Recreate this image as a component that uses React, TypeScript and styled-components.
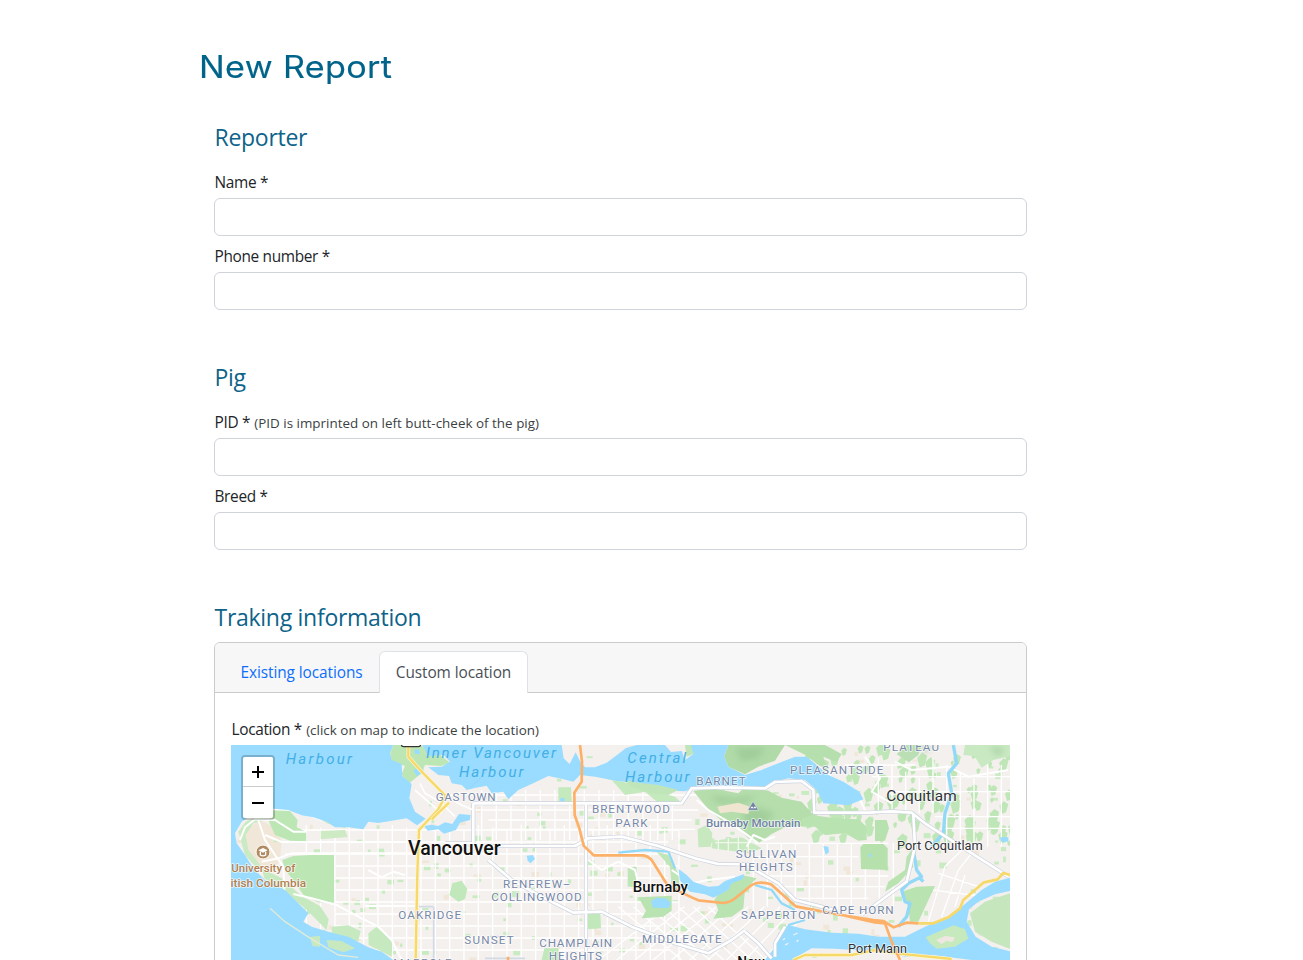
import React from 'react';
import styled, { createGlobalStyle } from 'styled-components';

const GlobalStyle = createGlobalStyle`
  *, *::before, *::after { box-sizing: border-box; }
  body {
    margin: 0;
    height: 960px;
    overflow: hidden;
    background: #fff;
    color: #212529;
    font: 400 15.4px/24px "Open Sans", "Noto Sans", sans-serif;
  }
`;

const Page = styled.main`
  width: 843px;
  height: 960px;
  margin-left: 199px;
  padding-top: 47px;
  overflow: hidden;
`;

const Title = styled.h1`
  margin: 0 0 32px;
  height: 40px;
  font: 400 31px/40px Inter, sans-serif;
  color: #00638a;
  -webkit-text-stroke: 0.15px #00638a;
  letter-spacing: 0.3px;
  white-space: nowrap;
  transform: scaleX(1.102);
  transform-origin: left;
`;

const Section = styled.section`
  margin: 0 15px 49px;
`;

const SectionTitle = styled.h2<{ $tight?: boolean }>`
  margin: 0 0 ${(p) => (p.$tight ? 5 : 14)}px;
  padding: 3px 0 0 0.5px;
  height: 38px;
  font-size: 23px;
  font-weight: 400;
  letter-spacing: -0.28px;
  line-height: 30px;
  color: #0e638a;
`;

const Field = styled.div`
  display: flex;
  flex-direction: column;
  gap: 3px;
  margin-bottom: 9px;
`;

const Label = styled.label`
  display: block;
  height: 24px;
  padding-left: 0.5px;
  letter-spacing: -0.33px;
  white-space: nowrap;
`;

const Hint = styled.small`
  margin-left: 0.5px;
  font-size: 13.4px;
  letter-spacing: 0.02px;
  color: #3b3f43;
`;

const Input = styled.input`
  width: 100%;
  height: 38px;
  padding: 6px 12px;
  border: 1px solid #ced4da;
  border-radius: 6px;
  background: #fff;
  font: inherit;
`;

const Card = styled.div`
  border: 1px solid #cbcbcb;
  border-radius: 6px;
  height: 500px;
`;

const CardHeader = styled.div`
  display: flex;
  align-items: flex-end;
  height: 50px;
  padding-left: 9px;
  background: #f7f7f7;
  border-bottom: 1px solid #cbcbcb;
  border-radius: 5px 5px 0 0;
`;

const Tab = styled.button<{ $active?: boolean }>`
  width: ${(p) => (p.$active ? 149 : 155)}px;
  height: 42px;
  margin-bottom: -1px;
  padding: 0;
  border: 1px solid ${(p) => (p.$active ? '#dee2e6' : 'transparent')};
  border-bottom: 0;
  border-radius: 6px 6px 0 0;
  background: ${(p) => (p.$active ? '#fff' : 'transparent')};
  color: ${(p) => (p.$active ? '#495057' : '#0d6efd')};
  font: inherit;
  letter-spacing: -0.08px;
  white-space: nowrap;
`;

const CardBody = styled.div`
  padding: 25px 16px 16px;
`;

const MapFrame = styled.div`
  position: relative;
  width: 779px;
  height: 400px;
  margin-top: 3px;
  background: #f4f0ee;
  overflow: hidden;
`;

const ZoomControl = styled.div`
  position: absolute;
  top: 10px;
  left: 10px;
  width: 34px;
  border: 2px solid rgba(0, 0, 0, 0.2);
  border-radius: 4px;
  background-clip: padding-box;
`;

const ZoomButton = styled.button`
  display: block;
  width: 30px;
  height: 30px;
  padding: 0;
  border: 0;
  background: #fff;

  &:first-child {
    border-bottom: 1px solid #ccc;
    border-radius: 2px 2px 0 0;
  }
  &:last-child {
    height: 31px;
    border-radius: 0 0 2px 2px;
  }
  svg { display: block; margin: auto; }
`;

/* Map units are a third of a pixel. */
const water = [
  // English Bay
  'M18 15H505L495 40 500 60 530 72 532 108 560 132 553 175 570 215 602 236 576 256 545 235 500 242 460 249 430 245 415 268 370 262 330 262 305 245 265 232 230 226 190 210 130 205 80 225 50 245 30 280 35 310 60 345 85 385 120 420 180 450 220 490 250 520 235 545 260 560 320 578 370 590 430 622 470 635 505 660H18Z',
  // False Creek
  'M597 258L620 254 640 258 660 247 682 252 702 222 737 225 735 240 705 248 693 270 657 281 640 268 608 272Z',
  // Vancouver Harbour
  'M592 15H1010L1016 55 1034 72 1052 37 1066 65 1080 82 1110 82 1145 68 1180 42 1203 24 1235 15H1320L1338 36 1370 33 1380 60 1405 42 1390 15H1510L1497 50 1510 80 1560 105 1610 90 1660 70 1710 50 1745 50 1775 75 1810 105 1855 125 1903 155 1915 178 1870 196 1795 190 1775 150 1740 120 1690 115 1650 125 1620 145 1560 140 1480 138 1420 140 1380 154 1270 150 1220 127 1180 124 1110 110 1065 105 1045 125 1010 116 970 108 920 132 880 150 850 178 835 155 800 160 785 137 750 144 725 150 710 135 680 130 672 108 640 105 610 82 650 80 675 65 655 44 610 48Z',
  // Burnaby Lake and Deer Lake
  'M1361 387L1385 405 1405 425 1450 440 1480 438 1500 423 1558 402 1553 418 1520 430 1510 450 1465 473 1440 463 1395 455 1364 420Z',
  'M1278 483L1295 473 1325 476 1338 490 1330 504 1284 503Z',
  // Fraser River
  'M1620 660L1650 620 1660 580 1690 555 1740 568 1820 578 1900 581 1960 590 2040 590 2100 560 2170 530 2210 500 2270 450 2310 425 2355 413V453L2310 463 2260 485 2232 508 2225 545 2252 590 2300 620 2355 634V660H2240L2120 645 2040 650 1970 635 1900 631 1830 626 1760 625 1700 660Z',
  'M230 578L265 579 272 597 322 595 350 603 315 590 380 608 438 636 450 660H405L350 645 310 649 280 632 275 615 250 610Z',
  'M905 347L923 345 930 357 916 370 908 362Z',
  'M1795 318L1810 320 1812 337 1802 344Z M2325 292H2350V305H2328Z',
  'M1006 174H1018V185H1006Z M1930 345L1940 340 1938 355Z',
];

const parks = [
  // Stanley Park
  ['#bde6b5', 'M505 15H580L628 30 675 68 648 78 600 75 590 100 550 132 530 103 540 78 495 62 496 40Z'],
  // Pacific Spirit and the golf courses
  ['#bde6b5', 'M205 348L255 345 327 345V488L280 487 236 466 205 420 180 390 172 360Z'],
  ['#bde6b5', 'M135 205L190 208 218 240 215 262 244 275V304L195 302 150 285 132 245Z'],
  ['#cdeac5', 'M335 253L305 225 290 238 305 250 360 265 372 250ZM287 273L360 270 368 291 287 298Z'],
  ['#c7e9c0', 'M110 385L170 415 230 468 285 498 311 538 305 570 240 505 178 455 118 415Z'],
  ['#c7e9c0', 'M320 560L370 556 407 573 400 602 380 615 321 595ZM430 580L455 560 502 605 500 650 431 615Z'],
  ['#c1e8ba', 'M682 430L710 422 727 447 720 478 700 485 673 465Z'],
  ['#c1e8ba', 'M1085 520L1126 516 1128 565 1088 568ZM958 625L1000 624 1002 660H950Z'],
  // Burnaby Mountain
  ['#b5deac', 'M1405 153L1460 145 1540 160 1560 140 1630 152 1670 173 1730 185 1765 225 1740 258 1680 262 1640 282 1600 310 1570 295 1535 260 1490 242 1450 208Z'],
  ['#b0dba8', 'M1510 15H1680L1650 62 1600 80 1560 103 1510 80 1497 50Z'],
  ['#c8e8c0', 'M1418 268L1445 255 1462 280 1458 320 1420 322ZM1463 302L1550 292 1610 325 1570 340 1460 325Z'],
  ['#b9e3b1', 'M1240 472L1340 467 1340 512 1315 530 1250 535 1263 512Z'],
  ['#b9e3b1', 'M1468 480L1490 445 1550 405 1595 415 1560 450 1555 505 1520 530 1465 536 1480 510Z'],
  ['#c0e6b8', 'M1295 335L1330 345 1360 400 1365 455 1340 440 1335 380ZM1208 380H1235V440H1208Z'],
  ['#b9e3b1', 'M1730 238L1760 225 1830 235 1900 238 1925 260 1925 300 1900 302 1860 280 1800 285 1770 260 1732 260Z'],
  ['#b6e1ad', 'M1906 322L1915 312H1975L1988 325V390L1908 387Z'],
  ['#b7e1ae', 'M1950 240H1985L1992 265 1980 302 1950 303Z'],
  ['#b6dfae', 'M1680 15H1800L1850 42 1835 67 1795 50 1810 90 1780 75 1740 44Z'],
  ['#bbdfb4', 'M2040 15H2090L2080 45 2052 67 2015 43Z'],
  ['#c9e9c2', 'M2220 15H2355V48L2305 60 2270 83 2248 48 2215 45Z'],
  ['#b9e3b1', 'M2030 455L2075 440 2130 438 2080 545 2055 545 2050 500Z'],
  ['#b9e3b1', 'M2045 350L2060 330 2065 380 2020 430 1980 455 1990 425 2040 390Z'],
  ['#c6e6be', 'M2235 520L2280 485 2355 460V627L2300 605 2250 575Z'],
  ['#c4e9bd', 'M1000 142L1038 142 1040 185 1000 188ZM1160 120L1215 130 1285 152 1350 170 1370 190 1300 188 1260 155 1200 165Z'],
];

const island = 'M2102 592L2140 575 2185 556 2220 567 2230 596 2190 620 2135 626 2115 610Z';

// Deterministic pseudo-random values for the small city blocks.
const noise = (i: number) => {
  const v = Math.sin(i * 127.1 + 11.7) * 43758.5453;
  return v - Math.floor(v);
};

const patches = Array.from({ length: 330 }, (_, i) => ({
  x: 30 + noise(i) * 2310,
  y: 20 + noise(i + 900) * 635,
  w: 7 + noise(i + 1800) * 16,
  h: 6 + noise(i + 2700) * 12,
  fill: noise(i + 3600) > 0.32 ? '#c9ebc2' : '#f1e7d8',
}));

const hillPatches = Array.from({ length: 150 }, (_, i) => ({
  x: 1730 + noise(i + 51) * 620,
  y: 18 + noise(i + 851) * 290,
  r: 5 + noise(i + 1451) * 11,
}));

const grid = [
  ...Array.from({ length: 27 }, (_, i) => `M${244 + i * 43} ${255 + (i % 3) * 8}V660`),
  ...Array.from({ length: 12 }, (_, i) => `M${i < 3 ? 180 : 330} ${270 + i * 36}H${1360 - (i % 3) * 30}`),
  ...Array.from({ length: 14 }, (_, i) => `M${770 + i * 44} 150V300`),
  'M740 165H1420M740 210H1420M790 240H1400M800 268H1410',
  ...Array.from({ length: 11 }, (_, i) => `M${1585 + i * 42} 310V${520 - (i % 3) * 20}`),
  'M1590 310H1990M1600 350H1900M1620 408H1990M1640 440H1980M1700 475H1930',
  ...Array.from({ length: 10 }, (_, i) => `M${1960 + i * 41} ${55 + (i % 4) * 20}V${i > 4 ? 320 : 220}`),
  'M1860 75H2070M1940 110H2355M2000 155H2355M2130 230H2355M2150 265H2355',
  ...Array.from({ length: 10 }, (_, i) => `M${1120 + i * 55} 660L${1330 + i * 48} 500`),
  ...Array.from({ length: 7 }, (_, i) => `M${1180 + i * 45} 500L${1370 + i * 42} 660`),
  'M2110 545L2160 380 2210 330M2150 530L2200 390 2240 340M2190 500L2220 405M2120 450L2280 470M2140 400L2260 440',
].join('');

const localRoads =
  'M45 300L60 262 90 238 150 240 205 275H244M135 208L210 210 290 240M100 240L120 300 150 345 175 380 178 455M110 365L160 355 200 340H560M120 285L170 306H560M205 462L260 475 335 495 410 535 460 560 500 600 530 660M430 390L470 412 505 395 540 405M420 498H570M1090 360L1130 390 1180 365 1230 390 1240 430M1415 180L1450 210 1510 245 1560 280 1600 310M1565 320L1585 285 1620 300 1650 290M1340 390L1400 430 1450 420 1530 410M1800 95L1840 130 1890 150 1920 210M1920 50L1965 115 1940 155 2000 190M2010 65L2060 90 2170 80 2230 110 2350 90';

const trunkRoads =
  'M745 190H1370L1400 145 1500 142 1620 145 1650 126 1730 123 1765 150 1768 218H1930L2000 214 2060 218 2100 250 2350 410M780 318H1050L1090 295 1190 290 1300 318 1410 355 1480 372 1575 373M1083 190V660M790 360L860 420 940 465 1045 518 1130 515 1220 560 1350 610 1450 640M2065 225L2070 320 2045 425 1990 465 1910 525M1590 390L1660 430 1710 480 1830 510M1560 575L1600 610 1640 655M1450 640L1520 600 1560 570M745 190V310H660M1650 650L1650 610 1680 560';

const highways = [
  'M550 15V50L590 95 662 168 638 210 582 270 577 400 572 660',
  'M672 188L620 238',
  'M1705 660L1740 645 1880 645 1950 630 2020 641 2180 657',
];

interface PlaceProps {
  x: number;
  y: number;
  width: number;
  kind?: 'area' | 'city' | 'town' | 'water' | 'poi' | 'campus';
  size?: number;
  children: string;
}

const placeStyles = {
  area: { fill: '#7688a8', size: 35, weight: 400 },
  city: { fill: '#111', size: 57, weight: 500 },
  town: { fill: '#303236', size: 41, weight: 400 },
  water: { fill: '#43afe5', size: 45, weight: 400 },
  poi: { fill: '#6f82a3', size: 35, weight: 500 },
  campus: { fill: '#b08052', size: 35, weight: 500 },
};

const PlaceText = styled.text`
  font-family: Roboto, sans-serif;
  paint-order: stroke;
  stroke-linejoin: round;
`;

function Place({ x, y, width, kind = 'area', size, children }: PlaceProps) {
  const s = placeStyles[kind];
  const spaced = kind === 'area' || kind === 'water';
  return (
    <PlaceText
      x={x}
      y={y}
      textLength={width}
      lengthAdjust={spaced ? 'spacing' : 'spacingAndGlyphs'}
      fontSize={size ?? s.size}
      fontWeight={s.weight}
      fontStyle={kind === 'water' ? 'italic' : 'normal'}
      fill={s.fill}
      stroke={kind === 'water' ? 'none' : 'rgba(255,255,255,.75)'}
      strokeWidth={5}
    >
      {children}
    </PlaceText>
  );
}

function CityMap() {
  return (
    <svg width="779" height="215" viewBox="18 15 2337 645" fill="none" display="block">
      <defs>
        <filter id="relief" x="-20%" y="-20%" width="140%" height="140%">
          <feGaussianBlur stdDeviation="9" />
        </filter>
      </defs>
      <rect x="18" y="15" width="2337" height="645" fill="#f4f0ee" />
      <path d="M60 270L105 240 145 260 170 300 165 365 130 400 85 360 55 320Z" fill="#f1e7d8" />
      {patches.map((p, i) => (
        <rect key={i} x={p.x} y={p.y} width={p.w} height={p.h} fill={p.fill} />
      ))}
      {hillPatches.map((p, i) => (
        <path key={i} d={`M${p.x} ${p.y}l${p.r} ${-p.r} ${p.r} ${p.r * 0.6} ${-p.r * 0.5} ${p.r * 1.9} ${-p.r} ${p.r * 0.4}Z`} fill="#bfe6b7" />
      ))}
      <path d={grid} stroke="#fff" strokeWidth="4" />
      {parks.map(([fill, d], i) => (
        <path key={i} d={d} fill={fill} />
      ))}
      <path d="M40 275L62 245 110 225 135 215 130 235 85 250 62 285 70 330 110 380 100 390 60 345Z" fill="#c9eac2" />
      <g filter="url(#relief)" fill="#8fbf8c" opacity=".5">
        <path d="M1530 25L1620 20 1600 55 1550 65ZM1550 225L1590 200 1650 220 1620 250 1570 255ZM1450 165L1530 175 1600 165 1560 190 1480 190Z" />
        <path d="M2070 15H2130L2100 40ZM2290 20L2340 25 2320 50Z" />
      </g>
      <path d="M1477 200L1540 188 1575 200 1570 222 1520 215 1485 220Z" fill="#efe5d0" />
      <path d="M1470 308H1600M1480 295V330M1510 295V335M1540 292V335M1570 300V335" stroke="#eef7ea" strokeWidth="4" />
      <path d={localRoads} stroke="#fff" strokeWidth="6" strokeLinejoin="round" />
      {water.map((d, i) => (
        <path key={i} d={d} fill="#99dcff" />
      ))}
      <path d="M1360 150L1300 135 1240 128 1200 120 1220 140 1270 158 1330 165ZM1380 15L1398 15 1405 42 1385 50Z" fill="#bfe5b9" />
      <path d={island} fill="#c6e9bd" />
      <path d="M2133 600L2160 588 2190 592 2182 607 2165 602 2150 612Z" fill="#efe7e2" />
      <path d="M565 90L578 85 590 100 575 108ZM568 30L582 27 585 42 570 42Z" fill="#99dcff" />
      <path d="M255 590L285 588 285 620 262 618ZM305 600L350 603 390 625 355 637 310 622Z" fill="#c8e9c0" />
      <path d="M135 505L180 545 248 590 340 645 400 652" stroke="#e0ebd8" strokeWidth="4" />
      <path d="M2185 15L2195 70 2170 100 2180 160 2160 220 2155 280 2120 320" stroke="#92d9f8" strokeWidth="10" strokeLinejoin="round" />
      <path d="M2065 330L2075 390 2090 410 2050 430 2030 450 2040 485 2055 490 2045 530 2020 560M2080 410L2095 425" stroke="#92d9f8" strokeWidth="10" strokeLinejoin="round" />
      <path d="M1180 338L1260 330 1330 335 1350 385M1590 435L1640 450 1670 490 1710 510M1690 555L1740 540" stroke="#92d9f8" strokeWidth="7" />
      <path d="M1674 600L1680 595M1680 615L1690 610M1705 585L1718 579M1715 605L1720 600" stroke="#f4f0ee" strokeWidth="4" />
      <path d="M795 80L770 110 735 145" stroke="#82bfe8" strokeWidth="2" strokeDasharray="6 5" />

      <g stroke="#ccd3df" strokeWidth="12" strokeLinejoin="round">
        <path d={trunkRoads} />
        <path d={trunkRoads} stroke="#fff" strokeWidth="8" />
      </g>
      <path d="M625 500H582M626 500V660M795 590H850M780 655H900" stroke="#d2dae6" strokeWidth="5" />
      <path d="M675 175L710 195 745 210M650 190L690 230M665 170L700 160 745 163M570 150L650 220M585 130L600 160 645 185" stroke="#fff" strokeWidth="5" />

      {highways.map((d, i) => (
        <g key={i} strokeLinejoin="round">
          <path d={d} stroke="#fff6cf" strokeWidth="11" />
          <path d={d} stroke="#f6d969" strokeWidth="7" />
        </g>
      ))}
      <path d="M2080 550L2125 550 2170 532 2205 505 2215 480 2275 428 2318 418 2335 399 2355 405" stroke="#f6d969" strokeWidth="8" strokeLinejoin="round" />
      <path d="M1065 15L1071 65 1070 125 1048 158 1049 225 1063 265 1076 317 1106 346H1255Q1268 347 1280 360L1325 432Q1350 450 1420 481L1495 489Q1520 487 1540 467L1580 435Q1600 422 1638 433L1680 470 1712 499 1830 522 1945 540 1975 543 2006 562 2045 548 2080 550M1860 527L1950 547 1980 550 2000 605 2025 660M849 650V660" stroke="#fdb067" strokeWidth="8" strokeLinejoin="round" />

      <rect x="529" y="-5" width="58" height="25" rx="7" fill="#fff" stroke="#333" strokeWidth="4" />
      <circle cx="114" cy="336" r="21" fill="#b08a60" stroke="#fff" strokeWidth="3" />
      <path d="M100 331L114 324 128 331 114 338Z" fill="#fff" />
      <path d="M106 335V345Q114 350 122 345V335" stroke="#fff" strokeWidth="4" />
      <path d="M1568 211L1584 184 1601 211Z" fill="#6f82a3" stroke="#e5eedf" strokeWidth="2" />
      <path d="M1576 205L1581 199 1585 204 1590 199 1594 205Z" fill="#fff" />

      <Place x={182} y={73} width={199} kind="water">Harbour</Place>
      <Place x={603} y={53} width={390} kind="water">Inner Vancouver</Place>
      <Place x={702} y={111} width={193} kind="water">Harbour</Place>
      <Place x={1207} y={69} width={176} kind="water">Central</Place>
      <Place x={1200} y={127} width={193} kind="water">Harbour</Place>
      <Place x={632} y={184} width={180}>GASTOWN</Place>
      <Place x={1101} y={220} width={234}>BRENTWOOD</Place>
      <Place x={1171} y={260} width={97}>PARK</Place>
      <Place x={1414} y={136} width={148}>BARNET</Place>
      <Place x={1695} y={103} width={280}>PLEASANTSIDE</Place>
      <Place x={1975} y={34} width={167}>PLATEAU</Place>
      <Place x={1443} y={262} width={283} kind="poi">Burnaby Mountain</Place>
      <Place x={1532} y={353} width={182}>SULLIVAN</Place>
      <Place x={1542} y={392} width={161}>HEIGHTS</Place>
      <Place x={834} y={443} width={202}>RENFREW–</Place>
      <Place x={799} y={482} width={271}>COLLINGWOOD</Place>
      <Place x={520} y={537} width={188}>OAKRIDGE</Place>
      <Place x={718} y={612} width={148}>SUNSET</Place>
      <Place x={943} y={622} width={218}>CHAMPLAIN</Place>
      <Place x={971} y={660} width={160}>HEIGHTS</Place>
      <Place x={1251} y={610} width={239}>MIDDLEGATE</Place>
      <Place x={1548} y={537} width={223}>SAPPERTON</Place>
      <Place x={1792} y={521} width={214}>CAPE HORN</Place>
      <Place x={505} y={681} width={175}>MARPOLE</Place>
      <Place x={549} y={346} width={278} kind="city" size={59}>Vancouver</Place>
      <Place x={1223} y={457} width={166} kind="city" size={42}>Burnaby</Place>
      <Place x={1984} y={184} width={211} kind="town" size={46}>Coquitlam</Place>
      <Place x={2016} y={331} width={257} kind="town">Port Coquitlam</Place>
      <Place x={1869} y={639} width={177} kind="town">Port Mann</Place>
      <Place x={1537} y={682} width={82} kind="city" size={42}>New</Place>
      <Place x={19} y={397} width={192} kind="campus">University of</Place>
      <Place x={-18} y={440} width={261} kind="campus">British Columbia</Place>
    </svg>
  );
}

export default function App() {
  return (
    <>
      <GlobalStyle />
      <Page>
        <Title>New Report</Title>
        <Section>
          <SectionTitle>Reporter</SectionTitle>
          <Field>
            <Label>Name *</Label>
            <Input />
          </Field>
          <Field>
            <Label>Phone number *</Label>
            <Input />
          </Field>
        </Section>
        <Section>
          <SectionTitle>Pig</SectionTitle>
          <Field>
            <Label>PID * <Hint>(PID is imprinted on left butt-cheek of the pig)</Hint></Label>
            <Input />
          </Field>
          <Field>
            <Label>Breed *</Label>
            <Input />
          </Field>
        </Section>
        <Section>
          <SectionTitle $tight>Traking information</SectionTitle>
          <Card>
            <CardHeader>
              <Tab>Existing locations</Tab>
              <Tab $active>Custom location</Tab>
            </CardHeader>
            <CardBody>
              <Label>Location * <Hint>(click on map to indicate the location)</Hint></Label>
              <MapFrame>
                <CityMap />
                <ZoomControl>
                  <ZoomButton aria-label="Zoom in">
                    <svg width="12" height="12" viewBox="0 0 12 12"><path d="M6 0V12M0 6H12" stroke="#000" strokeWidth="2" /></svg>
                  </ZoomButton>
                  <ZoomButton aria-label="Zoom out">
                    <svg width="12" height="12" viewBox="0 0 12 12"><path d="M0 6H12" stroke="#000" strokeWidth="2" /></svg>
                  </ZoomButton>
                </ZoomControl>
              </MapFrame>
            </CardBody>
          </Card>
        </Section>
      </Page>
    </>
  );
}
